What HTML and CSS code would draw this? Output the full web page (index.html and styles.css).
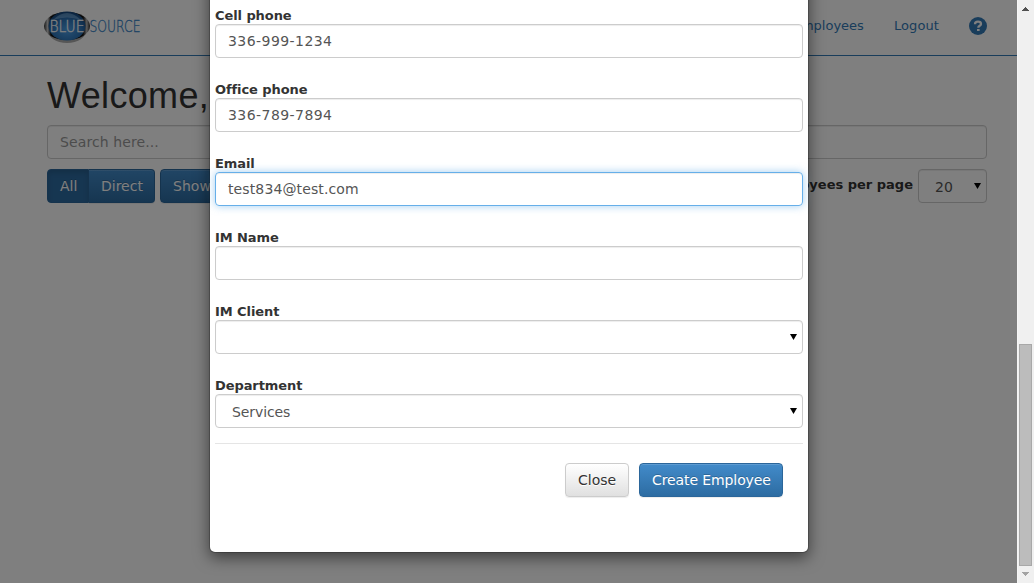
FILE: index.html
```html
<!DOCTYPE html>
<html lang="en">
<head>
<meta charset="utf-8">
<title>BlueSource</title>
<link rel="stylesheet" href="styles.css">
</head>
<body>
<div class="window">
  <div class="page">
    <header class="navbar">
      <svg class="logo" width="110" height="36" viewBox="0 0 110 36" role="img" aria-label="BlueSource">
        <defs>
          <linearGradient id="rim" x1="0" y1="0" x2="1" y2="0">
            <stop offset="0" stop-color="#333"/><stop offset=".08" stop-color="#ccc"/><stop offset=".15" stop-color="#111"/>
            <stop offset=".85" stop-color="#111"/><stop offset=".93" stop-color="#bbb"/><stop offset="1" stop-color="#222"/>
          </linearGradient>
          <radialGradient id="orb" cx=".5" cy=".65" r=".6">
            <stop offset="0" stop-color="#4d9fe6"/><stop offset=".65" stop-color="#2d74b8"/><stop offset="1" stop-color="#174b82"/>
          </radialGradient>
        </defs>
        <ellipse cx="24" cy="20" rx="20" ry="14" fill="#777" opacity=".6"/>
        <ellipse cx="24" cy="17" rx="23" ry="14" fill="url(#rim)"/>
        <ellipse cx="24" cy="17" rx="18.500" ry="14.500" fill="url(#orb)"/>
        <path d="M10 11Q24-3 38 11Q24 6 10 11Z" fill="#9bccf3" opacity=".45"/>
        <text class="logo-blue" x="6.500" y="22.500" textLength="35" lengthAdjust="spacingAndGlyphs">BLUE</text>
        <text class="logo-source" x="46.500" y="22.500" textLength="51" lengthAdjust="spacingAndGlyphs">SOURCE</text>
      </svg>
      <nav class="links">
        <a class="link-employees">Employees</a>
        <a class="link-logout">Logout</a>
        <svg class="help" width="18" height="18" viewBox="0 0 18 18">
          <circle cx="9" cy="9" r="9" fill="#337ab7"/>
          <path d="M6 7.200C6 5.200 7.200 4.700 9 4.700S12 5.400 12 7C12 8.900 9.300 8.500 9.300 10.700" fill="none" stroke="#fff" stroke-width="2.300"/>
          <path d="M8 12h2.600v2H8z" fill="#fff"/>
        </svg>
      </nav>
    </header>
    <main class="content">
      <h1 class="welcome">Welcome,</h1>
      <div class="control search">Search here...</div>
      <div class="toolbar">
        <div class="group"><span class="btn primary active">All</span><span class="btn primary direct">Direct</span></div>
        <span class="btn primary show">Show</span>
        <div class="per-page"><b class="per-label">Employees per page</b><div class="control select count"><span>20</span><i class="arrow"></i></div></div>
      </div>
    </main>
    <div class="backdrop"></div>
    <form class="modal">
      <div class="field"><label>Cell phone</label><div class="control phone">336-999-1234</div></div>
      <div class="field"><label>Office phone</label><div class="control phone">336-789-7894</div></div>
      <div class="field"><label>Email</label><div class="control focused">test834@test.com</div></div>
      <div class="field"><label>IM Name</label><div class="control"></div></div>
      <div class="field"><label>IM Client</label><div class="control select"><span></span><i class="arrow"></i></div></div>
      <div class="field"><label>Department</label><div class="control select"><span class="option">Services</span><i class="arrow"></i></div></div>
      <div class="footer"><span class="btn default">Close</span><span class="btn primary create">Create Employee</span></div>
    </form>
  </div>
  <div class="scrollbar">
    <svg width="9" height="5" viewBox="0 0 9 5" shape-rendering="crispEdges"><path d="M4 0h1v1h1v1h1v1h1v1H1V3h1V2h1V1h1z" fill="#505050"/></svg>
    <div class="thumb"></div>
    <svg width="9" height="5" viewBox="0 0 9 5" shape-rendering="crispEdges"><path d="M1 0h7v1H7v1H6v1H5v1H4V3H3V2H2V1H1z" fill="#a3a3a3"/></svg>
  </div>
</div>
</body>
</html>
```

FILE: styles.css
```css
* { box-sizing: border-box; }
body { margin: 0; font: 14px/20px Verdana, "DejaVu Sans", sans-serif; color: #333; background: #fff; }
.window { display: flex; width: 1034px; height: 583px; overflow: hidden; }
.page { position: relative; width: 1017px; height: 583px; overflow: hidden; }
.navbar { display: flex; justify-content: space-between; height: 56px; padding: 9px 30px 0 43px; border-bottom: 1px solid #337ab7; }
.logo { display: block; }
.logo-blue, .logo-source { font: 200 15.5px "DejaVu Sans", sans-serif; stroke-width: .35px; }
.logo-blue { fill: #fff; stroke: #fff; }
.logo-source { fill: #3a86c8; stroke: #3a86c8; }
.links { display: flex; height: 34px; align-items: center; font-size: 13px; color: #337ab7; }
.link-logout { margin: 0 30px; letter-spacing: .1px; }
.help { display: block; }
.content { padding: 20px 30px 0 47px; }
.welcome { margin: 0 0 9px; font: 36px/40px "Liberation Sans", sans-serif; letter-spacing: .35px; color: #333; }
.control { height: 34px; padding: 6px 12px; border: 1px solid #ccc; border-radius: 4px; box-shadow: inset 0 1px 1px rgba(0,0,0,.075); color: #555; white-space: nowrap; }
.search { color: #999; letter-spacing: .1px; }
.phone { letter-spacing: .44px; }
.toolbar { display: flex; margin-top: 10px; gap: 5px; }
.group { display: flex; }
.btn { display: block; height: 34px; padding: 6px 12px; border: 1px solid #ccc; border-radius: 4px; text-align: center; white-space: nowrap; box-shadow: inset 0 1px 0 rgba(255,255,255,.15), 0 1px 1px rgba(0,0,0,.075); }
.primary { color: #fff; border-color: #2b669a; background: linear-gradient(#428bca, #2d6ca2); text-shadow: 0 -1px 0 rgba(0,0,0,.2); }
.active { width: 42px; border-radius: 4px 0 0 4px; background: #2d6ca2; box-shadow: inset 0 3px 5px rgba(0,0,0,.125); }
.direct { width: 66px; border-left: 0; border-radius: 0 4px 4px 0; }
.show { width: 64px; }
.per-page { display: flex; margin-left: auto; gap: 5px; }
.per-label { font-size: 13px; line-height: 31px; }
.select { display: flex; align-items: center; justify-content: space-between; padding: 7px 5px 5px 16px; }
.option { letter-spacing: -.1px; }
.count { width: 69px; }
.arrow { width: 7px; height: 6px; background: #000; clip-path: polygon(0 0, 100% 0, 50% 100%); transform: translateY(-1px); }
.backdrop { position: absolute; inset: 0; background: rgba(0,0,0,.5); }
.modal { position: absolute; left: 209px; top: -40px; width: 600px; height: 593px; padding: 44px 5px 0; border: 1px solid rgba(0,0,0,.2); border-radius: 6px; background: #fff; background-clip: padding-box; box-shadow: 0 5px 15px rgba(0,0,0,.5); }
.field { height: 74px; }
.field label { display: block; height: 19px; line-height: 22px; font-size: 13px; font-weight: bold; letter-spacing: -.08px; white-space: nowrap; }
.focused { letter-spacing: .12px; border-color: #66afe9; box-shadow: inset 0 1px 1px rgba(0,0,0,.075), 0 0 8px rgba(102,175,233,.6); }
.footer { display: flex; justify-content: flex-end; gap: 10px; margin-top: -6px; padding: 19px 20px 0; border-top: 1px solid #e5e5e5; }
.default { width: 64px; color: #333; background: linear-gradient(#fff, #e0e0e0); text-shadow: 0 1px 0 #fff; }
.create { width: 144px; letter-spacing: -.1px; }
.scrollbar { display: flex; flex-direction: column; align-items: center; width: 17px; padding: 7px 2px 0 1px; background: #f0f0f0; border-left: 1px solid #f5f5f5; }
.thumb { width: 13px; height: 222px; margin: 332px 0 6px; border: 1px solid #a8a8a8; background: #bcbcbc; }
```
